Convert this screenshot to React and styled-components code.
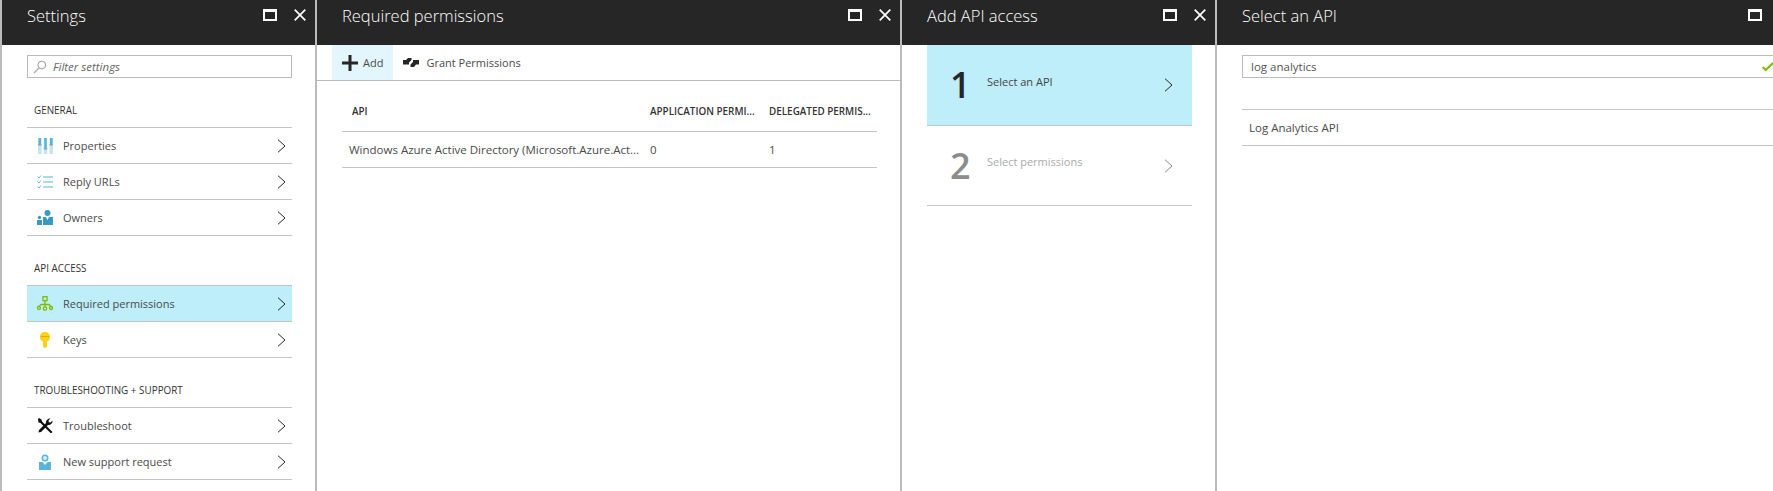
import styled, { createGlobalStyle } from "styled-components";

const Global = createGlobalStyle`
  html, body {
    margin: 0;
    padding: 0;
    background: #fff;
    overflow: hidden;
  }
  * { box-sizing: border-box; }
`;

const Page = styled.div`
  width: 1773px;
  height: 491px;
  display: flex;
  overflow: hidden;
  background: #fff;
  font-family: "Open Sans", "Liberation Sans", sans-serif;
  font-size: 11px;
  color: #4a4a4a;
  border-left: 2px solid #bbb;
`;
const Blade = styled.section`
  flex: none;
  width: ${(p) => p.$width}px;
  height: 491px;
  border-right: 2px solid #bbb;
  display: flex;
  flex-direction: column;
  &:last-child { border-right: 0; }
`;
const Header = styled.header`
  flex: none;
  height: 45px;
  background: #262626;
  padding: 0 9px 0 25px;
  display: flex;
  align-items: flex-start;
`;
const Title = styled.h2`
  flex: 1;
  margin: 0;
  padding-top: 4px;
  font-size: 16.5px;
  line-height: 24px;
  font-weight: 300;
  color: #fff;
`;
const HeaderIcons = styled.div`
  display: flex;
  align-items: center;
  gap: 17px;
  margin-top: 9px;
`;
const Maximize = styled.span`
  display: block;
  width: 14px;
  height: 12px;
  border: 2px solid #fff;
  border-top-width: 3px;
`;
const Body = styled.div`
  padding: 10px 23px 0 25px;
`;
const Field = styled.div`
  height: 23px;
  border: 1px solid #bbb;
  display: flex;
  align-items: center;
  padding-left: ${(p) => p.$indent}px;
  gap: 6px;
  font-size: 11.5px;
  color: #555;
`;
const Placeholder = styled.span`
  font-style: italic;
  color: #666;
`;
const FieldValue = styled.span`
  flex: 1;
`;
const SectionLabel = styled.div`
  height: 49px;
  padding: 0 0 11px 7px;
  display: flex;
  align-items: flex-end;
  font-size: 9.9px;
  line-height: 12px;
  font-weight: 400;
  color: #333;
`;
const List = styled.div`
  border-top: 1px solid #c4c4c4;
`;
const Row = styled.div`
  height: 36px;
  border-bottom: 1px solid #c4c4c4;
  background: ${(p) => (p.$active ? "#bdeefa" : "transparent")};
  display: flex;
  align-items: center;
  padding: 0 6px 0 9px;
`;
const RowIcon = styled.span`
  flex: none;
  width: 18px;
  height: 18px;
  margin-right: 9px;
  display: flex;
  align-items: center;
  justify-content: center;
`;
const RowText = styled.span`
  flex: 1;
`;
const Toolbar = styled.div`
  flex: none;
  height: 36px;
  border-bottom: 1px solid #bbb;
  padding-left: 15px;
  display: flex;
  align-items: stretch;
`;
const ToolButton = styled.div`
  display: flex;
  align-items: center;
  gap: 5px;
  padding: 0 10px;
  background: ${(p) => (p.$active ? "#e3f6fd" : "transparent")};
`;
const TableWrap = styled.div`
  padding: 0 23px 0 25px;
`;
const TableRow = styled.div`
  display: grid;
  grid-template-columns: 308px 119px 1fr;
  align-items: center;
  height: ${(p) => (p.$head ? 51 : 36)}px;
  border-bottom: 1px solid #c4c4c4;
  white-space: nowrap;
`;
const HeadCell = styled.div`
  font-size: 9.9px;
  font-weight: 600;
  color: #333;
  padding-top: 9px;
  padding-left: ${(p) => p.$indent || 0}px;
`;
const Cell = styled.div`
  font-size: 11.5px;
  padding-left: ${(p) => p.$indent || 0}px;
`;
const Steps = styled.div`
  padding: 0 23px 0 25px;
`;
const Step = styled.div`
  height: ${(p) => (p.$active ? 81 : 80)}px;
  border-bottom: 1px solid #c4c4c4;
  background: ${(p) => (p.$active ? "#bdeefa" : "transparent")};
  color: ${(p) => (p.$active ? "#444" : "#aaa")};
  display: flex;
  align-items: center;
  padding: 0 19px 0 23px;
`;
const StepNumber = styled.span`
  width: 37px;
  font-size: 36px;
  line-height: 40px;
  font-weight: 600;
  color: ${(p) => (p.$active ? "#262626" : "#8c8c8c")};
`;
const StepText = styled.span`
  flex: 1;
  align-self: flex-start;
  padding-top: ${(p) => (p.$active ? 29 : 28)}px;
`;
const ResultGap = styled.div`
  height: 32px;
  border-bottom: 1px solid #c4c4c4;
`;
const Result = styled.div`
  height: 36px;
  line-height: 35px;
  font-size: 11.5px;
  border-bottom: 1px solid #c4c4c4;
  padding-left: 7px;
`;

const Close = () => (
  <svg width="12" height="12" viewBox="0 0 12 12">
    <path d="M.7.7l10.6 10.6M11.3.7L.7 11.3" stroke="#fff" strokeWidth="1.7" fill="none" />
  </svg>
);

const Chevron = ({ color = "#262626" }) => (
  <svg width="9" height="14" viewBox="0 0 9 14" style={{ flex: "none" }}>
    <path d="M1 .7L8 7l-7 6.300" stroke={color} strokeWidth="1" fill="none" />
  </svg>
);

const SearchIcon = () => (
  <svg width="14" height="14" viewBox="0 0 14 14">
    <circle cx="8.800" cy="5" r="3.900" stroke="#999" strokeWidth="1" fill="none" />
    <path d="M6 8L1 13" stroke="#aaa" strokeWidth="1.200" />
  </svg>
);

const PropertiesIcon = () => (
  <svg width="15" height="16" viewBox="0 0 15 16">
    <path d="M0 0h3.500v16H0zM5.750 0h3.500v16h-3.500zM11.500 0H15v16h-3.500z" fill="#c3e4f3" />
    <path d="M.5 0h2.500v6H.5zM6.250 0h2.500v10h-2.500zM12 0h2.500v6H12z" fill="#59b4d9" />
    <path d="M0 6h3.500v1.500H0zM5.750 10h3.500v1.500h-3.500zM11.500 6H15v1.500h-3.500z" fill="#8fa6b2" />
  </svg>
);

const ReplyIcon = () => (
  <svg width="16" height="14" viewBox="0 0 16 14" fill="none">
    <path d="M6 2h10M6 7h10M6 12h10" stroke="#59b4d9" strokeWidth="1.200" />
    <path d="M.5 1.500L2 3l2-2.500M.5 6.500L2 8l2-2.500M.5 11.500L2 13l2-2.500" stroke="#59b4d9" strokeWidth=".9" />
  </svg>
);

const OwnersIcon = () => (
  <svg width="16" height="15" viewBox="0 0 16 15">
    <circle cx="10.500" cy="3" r="3" fill="#3999c6" />
    <path d="M6 7h3l1.500 3L12 7h4v8H6z" fill="#3999c6" />
    <circle cx="2.500" cy="7.500" r="1.700" fill="#3999c6" />
    <path d="M0 10h5v5H0z" fill="#3999c6" />
  </svg>
);

const TreeIcon = () => (
  <svg width="16" height="15" viewBox="0 0 16 15" fill="none" stroke="#7fba00" strokeWidth="1.300">
    <rect x="6" y=".7" width="4" height="4" />
    <circle cx="2" cy="12" r="1.500" />
    <circle cx="8" cy="12.500" r="1.700" />
    <circle cx="14" cy="12" r="1.500" />
    <path d="M8 4.700v6M2 10.500L4 8.500h8l2 2" />
  </svg>
);

const KeyIcon = () => (
  <svg width="10" height="16" viewBox="0 0 10 16">
    <path d="M5 0a5 5 0 0 1 2 9.600V15l-2 1-2-1V9.600A5 5 0 0 1 5 0z" fill="#fcd116" />
    <path d="M1 4h8v1H1z" fill="#e8a800" />
  </svg>
);

const ToolsIcon = () => (
  <svg width="15" height="15" viewBox="0 0 15 15" fill="#111">
    <path d="M1 0l2.500 1.500.5 2 8.500 8.500 2 2-1.500 1.500-2-2L2.500 5l-2-.5L0 1z" />
    <path d="M14.500 2.500l-2 2-1.700-.3-.3-1.700 2-2A4 4 0 0 0 8 5L1 12l-.5 2.500L3 14l7-7a4 4 0 0 0 4.500-4.500z" />
  </svg>
);

const SupportIcon = () => (
  <svg width="12" height="16" viewBox="0 0 12 16">
    <path d="M0 8h3.500L6 11l2.500-3H12v8H0z" fill="#59b4d9" />
    <circle cx="6" cy="4" r="3.500" fill="#59b4d9" />
    <circle cx="6" cy="4" r="2" fill="#d5eef8" />
  </svg>
);

const PlusIcon = () => (
  <svg width="16" height="16" viewBox="0 0 16 16">
    <path d="M6.500 0h3v6.500H16v3H9.500V16h-3V9.500H0v-3h6.500z" fill="#262626" />
  </svg>
);

const GrantIcon = () => (
  <svg width="16" height="9" viewBox="0 0 16 9" style={{ marginRight: 2 }}>
    <path d="M0 2h3l2-2h3.500v2L6 4.500v2H3H0zM16 6.500h-3l-2 2.500H7.500V6.500L10 4V2h6z" fill="#262626" />
  </svg>
);

const CheckIcon = () => (
  <svg width="12" height="10" viewBox="0 0 12 10" style={{ marginRight: 2 }}>
    <path d="M.7 5l3 3L11 1" stroke="#7fba00" strokeWidth="2" fill="none" />
  </svg>
);

const BladeHeader = ({ title }) => (
  <Header>
    <Title>{title}</Title>
    <HeaderIcons>
      <Maximize />
      <Close />
    </HeaderIcons>
  </Header>
);

const sections = [
  {
    label: "GENERAL",
    rows: [
      { text: "Properties", icon: <PropertiesIcon /> },
      { text: "Reply URLs", icon: <ReplyIcon /> },
      { text: "Owners", icon: <OwnersIcon /> },
    ],
  },
  {
    label: "API ACCESS",
    rows: [
      { text: "Required permissions", icon: <TreeIcon />, active: true },
      { text: "Keys", icon: <KeyIcon /> },
    ],
  },
  {
    label: "TROUBLESHOOTING + SUPPORT",
    rows: [
      { text: "Troubleshoot", icon: <ToolsIcon /> },
      { text: "New support request", icon: <SupportIcon /> },
    ],
  },
];

const App = () => {
  return (
    <Page>
      <Global />
      <Blade $width={315}>
        <BladeHeader title="Settings" />
        <Body>
          <Field $indent={5}>
            <SearchIcon />
            <Placeholder>Filter settings</Placeholder>
          </Field>
          {sections.map((s) => (
            <div key={s.label}>
              <SectionLabel>{s.label}</SectionLabel>
              <List>
                {s.rows.map((r) => (
                  <Row key={r.text} $active={r.active}>
                    <RowIcon>{r.icon}</RowIcon>
                    <RowText>{r.text}</RowText>
                    <Chevron />
                  </Row>
                ))}
              </List>
            </div>
          ))}
        </Body>
      </Blade>

      <Blade $width={585}>
        <BladeHeader title="Required permissions" />
        <Toolbar>
          <ToolButton $active>
            <PlusIcon />
            Add
          </ToolButton>
          <ToolButton>
            <GrantIcon />
            Grant Permissions
          </ToolButton>
        </Toolbar>
        <TableWrap>
          <TableRow $head>
            <HeadCell $indent={10}>API</HeadCell>
            <HeadCell>APPLICATION PERMI...</HeadCell>
            <HeadCell>DELEGATED PERMIS...</HeadCell>
          </TableRow>
          <TableRow>
            <Cell $indent={7}>Windows Azure Active Directory (Microsoft.Azure.Act...</Cell>
            <Cell>0</Cell>
            <Cell>1</Cell>
          </TableRow>
        </TableWrap>
      </Blade>

      <Blade $width={315}>
        <BladeHeader title="Add API access" />
        <Steps>
          <Step $active>
            <StepNumber $active>1</StepNumber>
            <StepText $active>Select an API</StepText>
            <Chevron />
          </Step>
          <Step>
            <StepNumber>2</StepNumber>
            <StepText>Select permissions</StepText>
            <Chevron color="#888" />
          </Step>
        </Steps>
      </Blade>

      <Blade $width={583}>
        <BladeHeader title="Select an API" />
        <Body>
          <Field $indent={8}>
            <FieldValue>log analytics</FieldValue>
            <CheckIcon />
          </Field>
          <ResultGap />
          <Result>Log Analytics API</Result>
        </Body>
      </Blade>
    </Page>
  );
};

export default App;
